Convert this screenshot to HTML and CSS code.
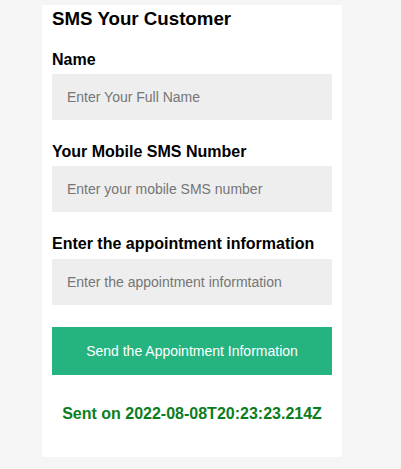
FILE: index.html
```html
<!DOCTYPE html>
<html>
<head>
<meta charset="utf-8">
<link rel="stylesheet" href="styles.css">
</head>
<body>
<div class="card">
  <h3 class="title">SMS Your Customer</h3>
  <label class="label label-first">Name</label>
  <input class="field" type="text" placeholder="Enter Your Full Name">
  <label class="label">Your Mobile SMS Number</label>
  <input class="field" type="text" placeholder="Enter your mobile SMS number">
  <label class="label label-last">Enter the appointment information</label>
  <input class="field" type="text" placeholder="Enter the appointment informtation">
  <button class="send" type="button">Send the Appointment Information</button>
  <p class="status">Sent on 2022-08-08T20:23:23.214Z</p>
</div>
</body>
</html>
```
FILE: styles.css
```css
html, body {
  margin: 0;
  padding: 0;
}
body {
  background: #f5f5f5;
  font-family: "Liberation Sans", Arial, sans-serif;
}
.card {
  box-sizing: border-box;
  width: 300px;
  margin: 5px 0 0 42px;
  padding: 0 10px 34px;
  background: #ffffff;
  display: flex;
  flex-direction: column;
}
.title {
  margin: 3px 0 0;
  font-size: 18.72px;
  line-height: 22px;
  font-weight: bold;
  color: #000;
}
.label {
  display: block;
  margin: 22px 0 5px;
  font-size: 16px;
  line-height: 19px;
  font-weight: bold;
  color: #000;
}
.label-first {
  margin-top: 20px;
}
.label-last {
  margin-bottom: 6px;
}
.field {
  box-sizing: border-box;
  width: 280px;
  height: 46px;
  margin: 0;
  padding: 0 15px;
  border: none;
  outline: none;
  background: #eeeeee;
  font-family: "Liberation Sans", Arial, sans-serif;
  font-size: 14px;
  color: #333;
}
.field::placeholder {
  color: #757575;
}
.send {
  width: 280px;
  height: 48px;
  margin: 22px 0 0;
  border: none;
  background: #25b37f;
  color: #ffffff;
  font-family: "Liberation Sans", Arial, sans-serif;
  font-size: 14px;
  cursor: pointer;
}
.status {
  margin: 29px 0 0;
  font-size: 16px;
  line-height: 19px;
  font-weight: bold;
  color: #0b7d1e;
  text-align: center;
}
```
